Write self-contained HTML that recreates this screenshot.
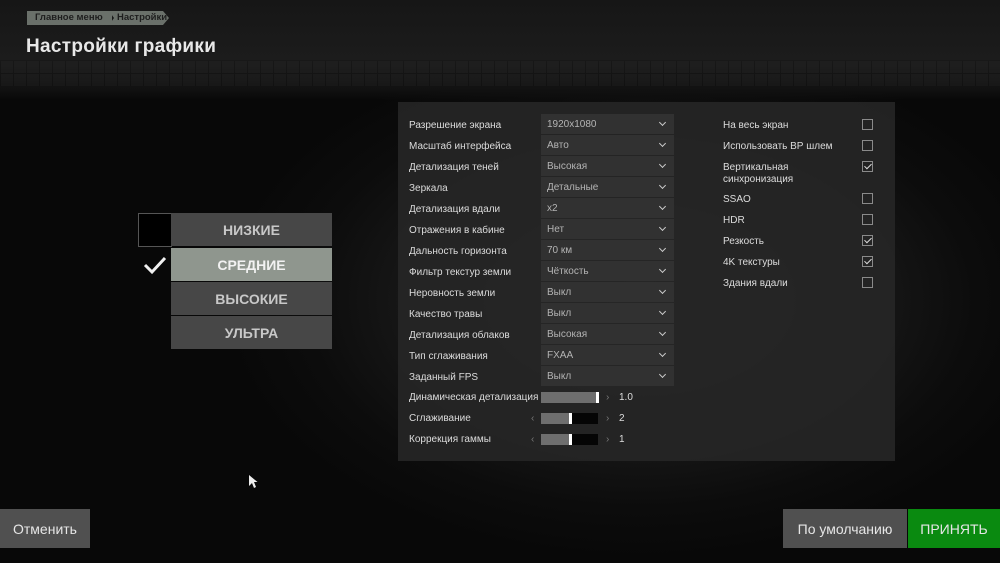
<!DOCTYPE html>
<html><head><meta charset="utf-8"><style>
*{margin:0;padding:0;box-sizing:border-box}
body{width:1000px;height:563px;overflow:hidden;position:relative;font-family:"Liberation Sans","DejaVu Sans",sans-serif;
background:radial-gradient(ellipse 420px 260px at 640px 300px,#2a2a2a 0%,#1b1b1b 45%,#0c0c0c 80%,#080808 100%);}
.top{position:absolute;left:0;top:0;width:1000px;height:100px;
background:linear-gradient(#161616,#1c1c1c 60%,#121212 88%,transparent);}
.grid{position:absolute;left:0;top:60px;width:1000px;height:26px;opacity:.25;
background-image:linear-gradient(90deg,#0e0e0e 1px,transparent 1px),linear-gradient(#0e0e0e 1px,transparent 1px);background-size:13px 13px;background-color:#2a2a2a}
.a{position:absolute}
.bc{position:absolute;top:11px;height:14px;background:#6a706a;color:#1e1e1e;font-size:9.5px;font-weight:bold;line-height:14px;padding-left:8px;white-space:nowrap}
h1{position:absolute;left:26px;top:36px;font-size:19px;color:#e8e8e8;font-weight:bold;letter-spacing:.3px}
.panel{position:absolute;left:398px;top:102px;width:497px;height:359px;background:rgba(38,38,38,.9)}
.lbl{position:absolute;left:409px;font-size:10px;color:#dcdcdc;line-height:12px;white-space:nowrap}
.dd{position:absolute;left:541px;width:133px;height:20px;background:#313131;color:#b4b4b4;font-size:10px;line-height:22px;padding-left:6px}
.dd:after{content:"";position:absolute;right:9px;top:6px;width:4px;height:4px;border-right:1.5px solid #ccc;border-bottom:1.5px solid #ccc;transform:rotate(45deg)}
.rl{position:absolute;left:723px;font-size:10px;color:#dcdcdc;line-height:12px}
.cb{position:absolute;left:862px;width:11px;height:11px;border:1.5px solid #8a8a8a}
.cb.on:after{content:"";position:absolute;left:2.5px;top:0px;width:3px;height:6px;border-right:1.5px solid #ddd;border-bottom:1.5px solid #ddd;transform:rotate(45deg)}
.sl{position:absolute;left:541px;width:57px;height:11px;background:#050505}
.sl i{position:absolute;left:0;top:0;height:11px;background:#6e6e6e;border-right:3px solid #fff}
.ar{position:absolute;font-size:10px;color:#777;line-height:11px}
.val{position:absolute;left:619px;font-size:10px;color:#ddd;line-height:11px}
.pb{position:absolute;left:171px;width:161px;height:33px;background:#474747;color:#c8c8c8;font-size:14px;font-weight:bold;text-align:center;line-height:35px}
.btn{position:absolute;top:509px;height:39px;line-height:40px;text-align:center;font-size:14px;color:#e6e6e6}
</style></head><body>
<div class="top"></div><div class="grid"></div>
<div class="bc" style="left:27px;width:85px">Главное меню</div>
<div class="bc" style="left:109px;width:60px;clip-path:polygon(0 0,90% 0,100% 50%,90% 100%,0 100%,5px 50%)">Настройки</div>
<h1>Настройки графики</h1>

<div class="a" style="left:138px;top:213px;width:34px;height:34px;background:#000;border:1px solid #555"></div>
<div class="pb" style="top:213px">НИЗКИЕ</div>
<div class="pb" style="top:248px;background:#8f968e;color:#f2f2f2">СРЕДНИЕ</div>
<div class="pb" style="top:282px">ВЫСОКИЕ</div>
<div class="pb" style="top:316px">УЛЬТРА</div>
<svg class="a" style="left:142px;top:255px" width="26" height="20"><path d="M3 10 L10 17 L23 3" stroke="#f0f0f0" stroke-width="3" fill="none"/></svg>

<div class="panel"></div>
<div class="lbl" style="top:120px">Разрешение экрана</div><div class="dd" style="top:114px">1920x1080</div>
<div class="lbl" style="top:141px">Масштаб интерфейса</div><div class="dd" style="top:135px">Авто</div>
<div class="lbl" style="top:162px">Детализация теней</div><div class="dd" style="top:156px">Высокая</div>
<div class="lbl" style="top:183px">Зеркала</div><div class="dd" style="top:177px">Детальные</div>
<div class="lbl" style="top:204px">Детализация вдали</div><div class="dd" style="top:198px">x2</div>
<div class="lbl" style="top:225px">Отражения в кабине</div><div class="dd" style="top:219px">Нет</div>
<div class="lbl" style="top:246px">Дальность горизонта</div><div class="dd" style="top:240px">70 км</div>
<div class="lbl" style="top:267px">Фильтр текстур земли</div><div class="dd" style="top:261px">Чёткость</div>
<div class="lbl" style="top:288px">Неровность земли</div><div class="dd" style="top:282px">Выкл</div>
<div class="lbl" style="top:309px">Качество травы</div><div class="dd" style="top:303px">Выкл</div>
<div class="lbl" style="top:330px">Детализация облаков</div><div class="dd" style="top:324px">Высокая</div>
<div class="lbl" style="top:351px">Тип сглаживания</div><div class="dd" style="top:345px">FXAA</div>
<div class="lbl" style="top:372px">Заданный FPS</div><div class="dd" style="top:366px">Выкл</div>

<div class="lbl" style="top:392px">Динамическая детализация</div>
<div class="sl" style="top:392px"><i style="width:58px"></i></div><div class="ar" style="left:606px;top:392px">›</div><div class="val" style="top:392px">1.0</div>
<div class="lbl" style="top:413px">Сглаживание</div>
<div class="ar" style="left:531px;top:413px">‹</div><div class="sl" style="top:413px"><i style="width:31px"></i></div><div class="ar" style="left:606px;top:413px">›</div><div class="val" style="top:413px">2</div>
<div class="lbl" style="top:434px">Коррекция гаммы</div>
<div class="ar" style="left:531px;top:434px">‹</div><div class="sl" style="top:434px"><i style="width:31px"></i></div><div class="ar" style="left:606px;top:434px">›</div><div class="val" style="top:434px">1</div>

<div class="rl" style="top:120px">На весь экран</div><div class="cb" style="top:119px"></div>
<div class="rl" style="top:141px">Использовать ВР шлем</div><div class="cb" style="top:140px"></div>
<div class="rl" style="top:162px">Вертикальная<br>синхронизация</div><div class="cb on" style="top:161px"></div>
<div class="rl" style="top:194px">SSAO</div><div class="cb" style="top:193px"></div>
<div class="rl" style="top:215px">HDR</div><div class="cb" style="top:214px"></div>
<div class="rl" style="top:236px">Резкость</div><div class="cb on" style="top:235px"></div>
<div class="rl" style="top:257px">4K текстуры</div><div class="cb on" style="top:256px"></div>
<div class="rl" style="top:278px">Здания вдали</div><div class="cb" style="top:277px"></div>

<svg class="a" style="left:248px;top:474px" width="10" height="15"><path d="M1 1 L1 12 L4 9 L6 14 L8 13 L6 8 L9.5 8 Z" fill="#eee"/></svg>

<div class="btn" style="left:0;width:90px;background:#505050">Отменить</div>
<div class="btn" style="left:783px;width:124px;background:#505050">По умолчанию</div>
<div class="btn" style="left:908px;width:92px;background:#0a8a10">ПРИНЯТЬ</div>
</body></html>
